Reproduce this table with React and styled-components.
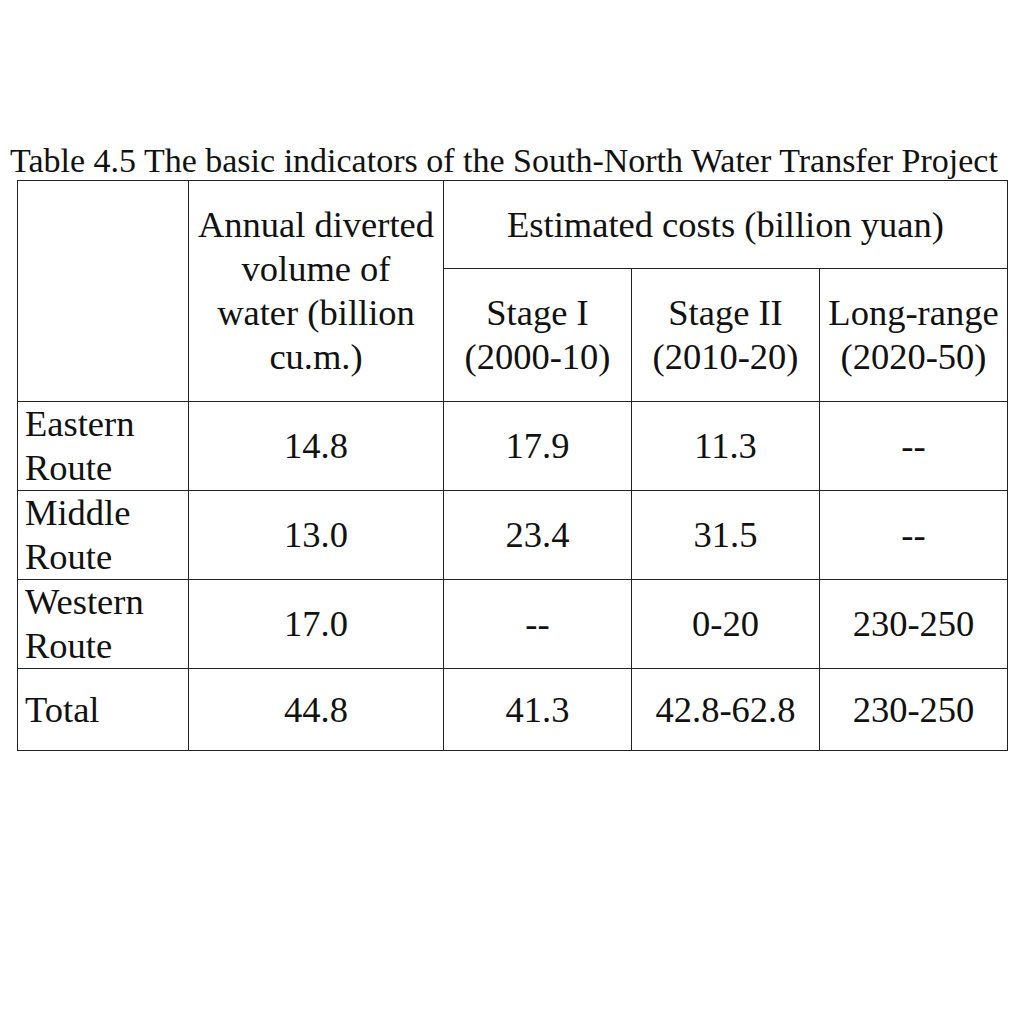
import styled, { createGlobalStyle } from "styled-components"

const GlobalStyle = createGlobalStyle`
  html, body {
    margin: 0;
    padding: 0;
    background: #fff;
  }
`

const Page = styled.main`
  width: 1024px;
  height: 1024px;
  padding-top: 141px;
  box-sizing: border-box;
  font-family: "Liberation Serif", "Times New Roman", serif;
  color: #111;
`

const Caption = styled.h1`
  margin: 0 0 0 10px;
  font-size: 34px;
  font-weight: normal;
  line-height: 39px;
  white-space: nowrap;
`

const Grid = styled.table`
  margin-left: 17px;
  width: 990px;
  border-collapse: collapse;
  table-layout: fixed;
  font-size: 36.5px;
  line-height: 44px;
`

const Cell = styled.td`
  border: 1.5px solid #222;
  padding: 0 1px;
  text-align: ${p => (p.$left ? "left" : "center")};
  vertical-align: middle;
  height: ${p => p.$h}px;
  padding-left: ${p => (p.$left ? "7px" : "1px")};
  white-space: nowrap;
`

const rows = [
  { label: ["Eastern", "Route"], vals: ["14.8", "17.9", "11.3", "--"], h: 88 },
  { label: ["Middle", "Route"], vals: ["13.0", "23.4", "31.5", "--"], h: 88 },
  { label: ["Western", "Route"], vals: ["17.0", "--", "0-20", "230-250"], h: 87 },
  { label: ["Total"], vals: ["44.8", "41.3", "42.8-62.8", "230-250"], h: 81 },
]

export default function App() {
  return (
    <Page>
      <GlobalStyle />
      <Caption>Table 4.5 The basic indicators of the South-North Water Transfer Project</Caption>
      <Grid>
        <colgroup>
          <col style={{ width: 171 }} />
          <col style={{ width: 255 }} />
          <col style={{ width: 188 }} />
          <col style={{ width: 188 }} />
          <col style={{ width: 188 }} />
        </colgroup>
        <tbody>
          <tr>
            <Cell rowSpan={2} />
            <Cell rowSpan={2}>
              Annual diverted<br />volume of<br />water (billion<br />cu.m.)
            </Cell>
            <Cell colSpan={3} $h={87}>Estimated costs (billion yuan)</Cell>
          </tr>
          <tr>
            <Cell $h={132}>Stage I<br />(2000-10)</Cell>
            <Cell $h={132}>Stage II<br />(2010-20)</Cell>
            <Cell $h={132}>Long-range<br />(2020-50)</Cell>
          </tr>
          {rows.map(r => (
            <tr key={r.label.join(" ")}>
              <Cell $left $h={r.h}>
                {r.label.map((l, i) => (
                  <span key={l}>{i > 0 && <br />}{l}</span>
                ))}
              </Cell>
              {r.vals.map((v, i) => (
                <Cell key={i} $h={r.h}>{v}</Cell>
              ))}
            </tr>
          ))}
        </tbody>
      </Grid>
    </Page>
  )
}
